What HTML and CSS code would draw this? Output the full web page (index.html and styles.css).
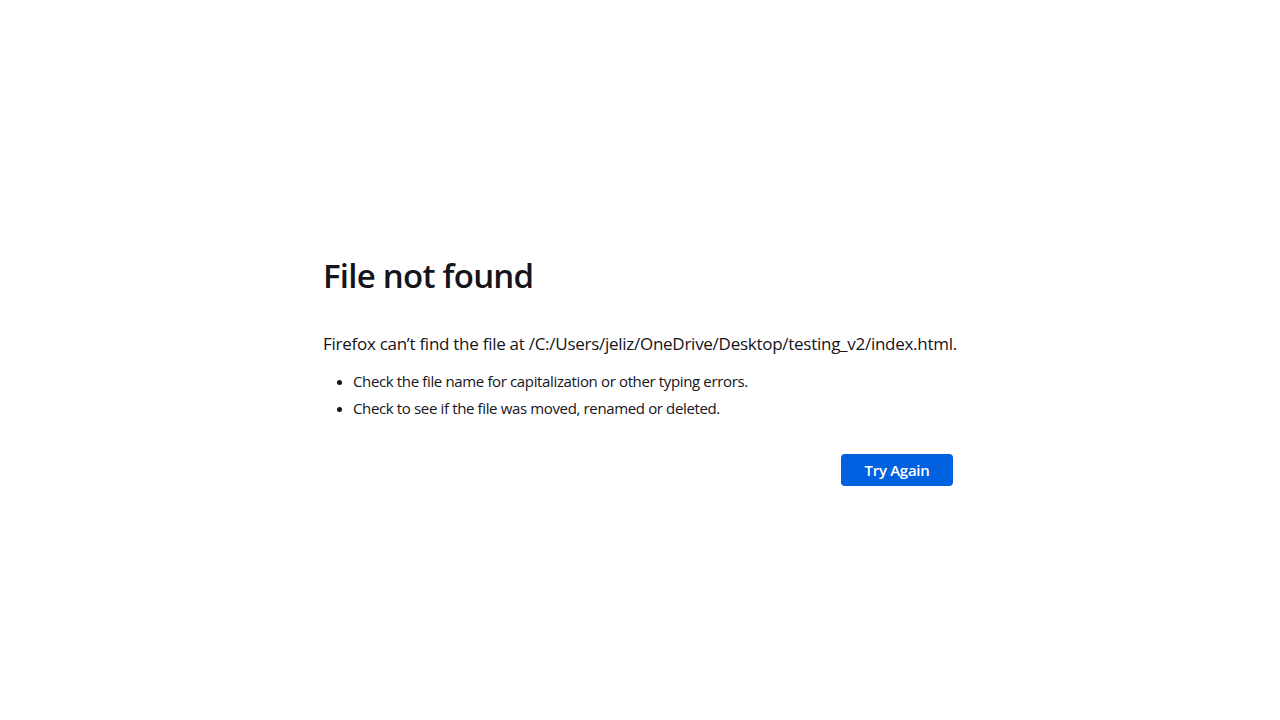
FILE: index.html
```html
<!DOCTYPE html>
<html lang="en">
<head>
<meta charset="utf-8">
<title>Problem loading page</title>
<link rel="stylesheet" href="styles.css">
</head>
<body>
<main class="page">
  <div class="container">
    <h1 class="title">File not found</h1>
    <p class="intro">Firefox can’t find the file at /C:/Users/jeliz/OneDrive/Desktop/testing_v2/index.html.</p>
    <ul class="tips">
      <li>Check the file name for capitalization or other typing errors.</li>
      <li>Check to see if the file was moved, renamed or deleted.</li>
    </ul>
    <div class="actions">
      <button class="primary" type="button">Try Again</button>
    </div>
  </div>
</main>
</body>
</html>
```

FILE: styles.css
```css
html, body {
  margin: 0;
  padding: 0;
  background: #ffffff;
}
body {
  font-family: "Open Sans", "Noto Sans", sans-serif;
  color: #15141a;
  width: 1280px;
  height: 720px;
  overflow: hidden;
}
.page {
  padding-top: 254px;
}
.container {
  width: 634px;
  margin: 0 auto;
  display: flex;
  flex-direction: column;
}
.title {
  margin: 0;
  font-size: 33px;
  line-height: 44px;
  font-weight: 600;
  letter-spacing: -0.75px;
}
.intro {
  margin: 34px 0 0;
  font-size: 17px;
  line-height: 24px;
  letter-spacing: -0.27px;
}
.tips {
  margin: 12px 0 0;
  padding-left: 30px;
  font-size: 15px;
  line-height: 27px;
  letter-spacing: -0.36px;
}
.tips li::marker {
  font-size: 13px;
}
.actions {
  display: flex;
  justify-content: flex-end;
  margin-top: 32px;
  padding-right: 4px;
}
.primary {
  width: 112px;
  height: 32px;
  border: none;
  border-radius: 4px;
  background: #0061e0;
  color: #ffffff;
  font-family: inherit;
  font-size: 15px;
  font-weight: 600;
  letter-spacing: -0.3px;
  padding: 0;
}
```
